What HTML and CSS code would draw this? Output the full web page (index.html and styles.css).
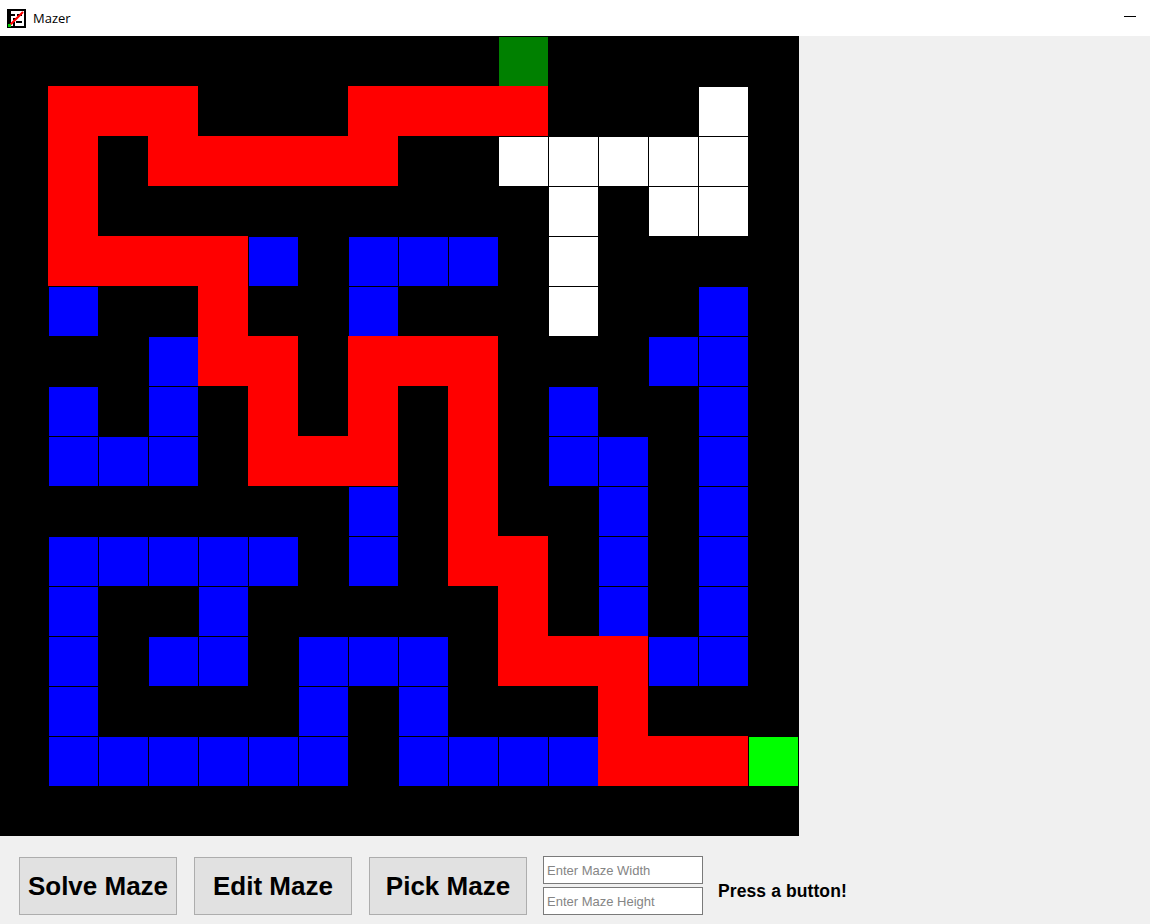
FILE: index.html
```html
<!DOCTYPE html>
<html>
<head>
<meta charset="utf-8">
<title>Mazer</title>
<link rel="stylesheet" href="styles.css">
</head>
<body>
<div class="titlebar">
  <svg class="app-icon" width="19" height="19" viewBox="0 0 19 19">
    <rect x="0" y="0" width="19" height="19" fill="#000"/>
    <rect x="2" y="2" width="15" height="15" fill="#fff"/>
    <rect x="2" y="2" width="2" height="15" fill="#000"/>
    <rect x="4" y="5" width="4" height="2" fill="#000"/>
    <rect x="6" y="9" width="3" height="2" fill="#000"/>
    <rect x="10" y="5" width="5" height="2" fill="#000"/>
    <rect x="9" y="12" width="6" height="2" fill="#000"/>
    <rect x="6" y="13" width="2" height="4" fill="#000"/>
    <line x1="3" y1="16" x2="16" y2="3" stroke="#f00" stroke-width="2.2"/>
    <rect x="1" y="15" width="3" height="3" fill="#0c0"/>
  </svg>
  <span class="title">Mazer</span>
  <span class="minimize"></span>
</div>
<div class="main">
  <div class="canvas">
    <div class="grid">
      <i></i><i></i><i></i><i></i><i></i><i></i><i></i><i></i><i></i><i></i><i class="g"></i><i></i><i></i><i></i><i></i><i></i>
      <i></i><i class="r"></i><i class="r"></i><i class="r"></i><i></i><i></i><i></i><i class="r"></i><i class="r"></i><i class="r"></i><i class="r"></i><i></i><i></i><i></i><i class="w"></i><i></i>
      <i></i><i class="r"></i><i></i><i class="r"></i><i class="r"></i><i class="r"></i><i class="r"></i><i class="r"></i><i></i><i></i><i class="w"></i><i class="w"></i><i class="w"></i><i class="w"></i><i class="w"></i><i></i>
      <i></i><i class="r"></i><i></i><i></i><i></i><i></i><i></i><i></i><i></i><i></i><i></i><i class="w"></i><i></i><i class="w"></i><i class="w"></i><i></i>
      <i></i><i class="r"></i><i class="r"></i><i class="r"></i><i class="r"></i><i class="b"></i><i></i><i class="b"></i><i class="b"></i><i class="b"></i><i></i><i class="w"></i><i></i><i></i><i></i><i></i>
      <i></i><i class="b"></i><i></i><i></i><i class="r"></i><i></i><i></i><i class="b"></i><i></i><i></i><i></i><i class="w"></i><i></i><i></i><i class="b"></i><i></i>
      <i></i><i></i><i></i><i class="b"></i><i class="r"></i><i class="r"></i><i></i><i class="r"></i><i class="r"></i><i class="r"></i><i></i><i></i><i></i><i class="b"></i><i class="b"></i><i></i>
      <i></i><i class="b"></i><i></i><i class="b"></i><i></i><i class="r"></i><i></i><i class="r"></i><i></i><i class="r"></i><i></i><i class="b"></i><i></i><i></i><i class="b"></i><i></i>
      <i></i><i class="b"></i><i class="b"></i><i class="b"></i><i></i><i class="r"></i><i class="r"></i><i class="r"></i><i></i><i class="r"></i><i></i><i class="b"></i><i class="b"></i><i></i><i class="b"></i><i></i>
      <i></i><i></i><i></i><i></i><i></i><i></i><i></i><i class="b"></i><i></i><i class="r"></i><i></i><i></i><i class="b"></i><i></i><i class="b"></i><i></i>
      <i></i><i class="b"></i><i class="b"></i><i class="b"></i><i class="b"></i><i class="b"></i><i></i><i class="b"></i><i></i><i class="r"></i><i class="r"></i><i></i><i class="b"></i><i></i><i class="b"></i><i></i>
      <i></i><i class="b"></i><i></i><i></i><i class="b"></i><i></i><i></i><i></i><i></i><i></i><i class="r"></i><i></i><i class="b"></i><i></i><i class="b"></i><i></i>
      <i></i><i class="b"></i><i></i><i class="b"></i><i class="b"></i><i></i><i class="b"></i><i class="b"></i><i class="b"></i><i></i><i class="r"></i><i class="r"></i><i class="r"></i><i class="b"></i><i class="b"></i><i></i>
      <i></i><i class="b"></i><i></i><i></i><i></i><i></i><i class="b"></i><i></i><i class="b"></i><i></i><i></i><i></i><i class="r"></i><i></i><i></i><i></i>
      <i></i><i class="b"></i><i class="b"></i><i class="b"></i><i class="b"></i><i class="b"></i><i class="b"></i><i></i><i class="b"></i><i class="b"></i><i class="b"></i><i class="b"></i><i class="r"></i><i class="r"></i><i class="r"></i><i class="e"></i>
      <i></i><i></i><i></i><i></i><i></i><i></i><i></i><i></i><i></i><i></i><i></i><i></i><i></i><i></i><i></i><i></i>
    </div>
  </div>
</div>
<div class="toolbar">
  <button class="btn">Solve Maze</button>
  <button class="btn">Edit Maze</button>
  <button class="btn">Pick Maze</button>
  <div class="inputs">
    <input class="field" type="text" placeholder="Enter Maze Width">
    <input class="field" type="text" placeholder="Enter Maze Height">
  </div>
  <span class="status">Press a button!</span>
</div>
</body>
</html>
```
FILE: styles.css
```css
html, body {
  margin: 0;
  padding: 0;
}
body {
  background: #f0f0f0;
  width: 1150px;
  height: 924px;
  overflow: hidden;
  font-family: "Liberation Sans", Arial, sans-serif;
}
.titlebar {
  height: 36px;
  background: #ffffff;
  display: flex;
  align-items: center;
}
.app-icon {
  margin-left: 7px;
  flex: none;
}
.title {
  margin-left: 7px;
  font-family: "Open Sans", "Noto Sans", sans-serif;
  font-size: 13px;
  color: #000;
  margin-top: -1px;
}
.minimize {
  margin-left: auto;
  margin-right: 14px;
  width: 12px;
  height: 1px;
  background: #000;
  margin-top: -3px;
}
.main {
  display: flex;
  height: 800px;
}
.canvas {
  width: 799px;
  height: 800px;
  background: #000;
  overflow: hidden;
}
.grid {
  margin-left: -2px;
  display: grid;
  grid-template-columns: repeat(16, 50px);
  grid-template-rows: repeat(16, 50px);
}
.grid i {
  display: block;
  box-sizing: border-box;
}
.grid .b, .grid .w, .grid .g, .grid .e {
  border-left: 1px solid #000;
  border-top: 1px solid #000;
}
.grid .b { background: #0000ff; }
.grid .w { background: #ffffff; }
.grid .g { background: #008000; }
.grid .e { background: #00ff00; }
.grid .r { background: #ff0000; }

.toolbar {
  display: flex;
  align-items: flex-start;
  padding: 20px 0 0 19px;
  height: 68px;
}
.btn {
  margin: 1px 17px 0 0;
  width: 158px;
  height: 58px;
  box-sizing: border-box;
  border: 1px solid #adadad;
  background: #e1e1e1;
  font-family: "Liberation Sans", Arial, sans-serif;
  font-weight: bold;
  font-size: 26px;
  color: #000;
  padding: 0;
}
.btn:last-of-type {
  margin-right: 16px;
}
.inputs {
  display: flex;
  flex-direction: column;
  gap: 3px;
}
.field {
  width: 160px;
  height: 28px;
  box-sizing: border-box;
  border: 1px solid #7a7a7a;
  background: #fff;
  margin: 0;
  padding: 0 0 0 3px;
  font-family: "Liberation Sans", Arial, sans-serif;
  font-size: 13px;
  outline: none;
}
.field::placeholder {
  color: #858585;
}
.status {
  margin-left: 15px;
  margin-top: 25px;
  font-weight: bold;
  font-size: 17.5px;
  line-height: 20px;
  color: #000;
  letter-spacing: 0.1px;
}
```
